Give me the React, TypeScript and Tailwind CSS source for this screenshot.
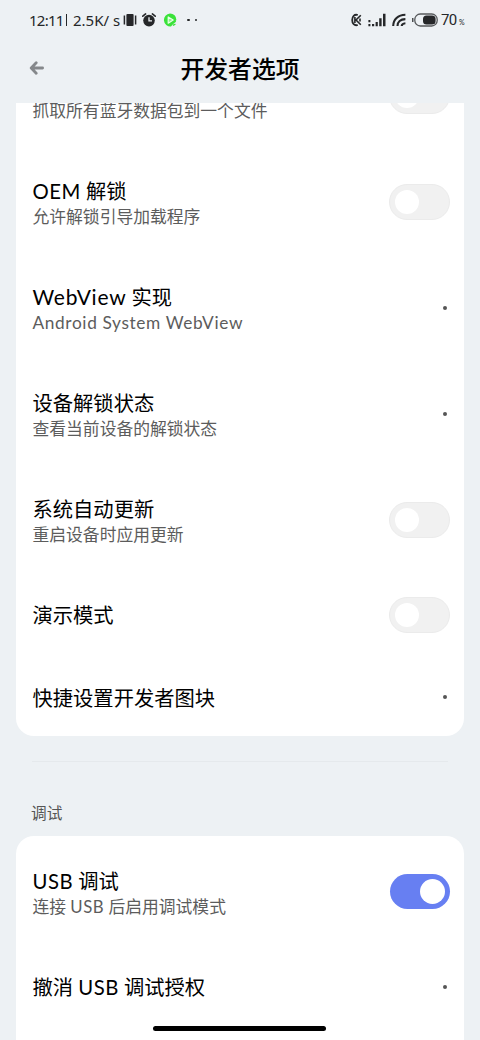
import type { ReactNode } from "react";

function Latin({ children, wide = false }: { children: ReactNode; wide?: boolean }) {
  return <span className={wide ? "text-[21px] leading-none tracking-[0.75px]" : "tracking-[0.5px]"}>{children}</span>;
}

function Toggle({ on = false }: { on?: boolean }) {
  return (
    <span
      className={
        on
          ? "mr-[0.5px] mb-px flex h-[35px] w-[60px] shrink-0 items-center justify-end rounded-full bg-[#677ff2] pr-[5px]"
          : "flex h-9 w-[61px] shrink-0 items-center rounded-full border border-[#ebebeb] bg-[#f1f1f1] pl-[5px]"
      }
    >
      <span className={on ? "size-[25px] rounded-full bg-white" : "size-6 rounded-full bg-white"} />
    </span>
  );
}

function Dot() {
  return <span className="mr-[3px] size-1 shrink-0 rounded-full bg-[#555]" />;
}

function Row({ title, sub, end, last = false }: { title?: ReactNode; sub?: ReactNode; end: ReactNode; last?: boolean }) {
  return (
    <div
      className={
        sub
          ? "flex h-[106px] shrink-0 items-center justify-between pr-3.5 pl-[16.5px]"
          : last
            ? "flex h-20 shrink-0 items-center justify-between pt-[2px] pr-3.5 pl-[16.5px]"
            : "flex h-[83px] shrink-0 items-center justify-between pr-3.5 pl-[16.5px]"
      }
    >
      <div className="pt-[2.4px] whitespace-nowrap">
        <div className="h-[27px] text-[20.3px] leading-[27px] text-black">{title}</div>
        {sub && <div className="text-[16.8px] leading-[23px] text-[#5c5c5c]">{sub}</div>}
      </div>
      {end}
    </div>
  );
}

function StatusBar() {
  return (
    <div className="flex h-10 shrink-0 items-center pl-[29px] text-[#252729]">
      <div className="flex w-[92px] items-center font-['Noto_Sans',sans-serif] text-[15px] whitespace-nowrap">
        <span className="w-[37px] tracking-[-0.75px]">12:11</span>
        <span className="mr-[6px] h-3 w-px bg-current" />
        <span className="w-[40px]">2.5K/</span>
        <span>s</span>
      </div>
      <svg className="ml-[2px] h-3.5 w-3.5" viewBox="0 0 14 14" fill="currentColor">
        <rect x="3.4" y="1" width="7.2" height="12" rx="1" />
        <path d="M1.4 2.4v9.2M12.6 2.4v9.2" stroke="currentColor" strokeWidth="1.5" />
      </svg>
      <svg className="ml-[5px] h-3.5 w-3.5" viewBox="0 0 14 14">
        <circle cx="7" cy="7.6" r="5.8" fill="currentColor" />
        <path d="M.8 3.2 3.6 .9M13.2 3.2 10.4 .9" stroke="currentColor" strokeWidth="1.6" strokeLinecap="round" />
        <path d="M7 4.2v3.7h3" stroke="#edf1f4" strokeWidth="1.3" fill="none" />
      </svg>
      <svg className="ml-[7px] h-3.5 w-3.5" viewBox="0 0 14 14">
        <path d="M7 .4a6.5 6.5 0 1 0 1 13.1L13.4 7A6.5 6.5 0 0 0 7 .4Z" fill="#3ae239" />
        <path d="M5.2 4v6.2L10.2 7Z" stroke="#e8ffe8" strokeWidth="1.2" fill="#8df28b" strokeLinejoin="round" />
        <path d="m9 10.6 3.8-2.3M9.8 12.4l2.6-1.2" stroke="#3ae239" strokeWidth="1.3" />
      </svg>
      <span className="ml-[10px] size-[2.5px] rounded-full bg-current" />
      <span className="ml-[5px] size-[2.5px] rounded-full bg-current" />
      <svg className="ml-auto h-3.5 w-[11px]" viewBox="0 0 11 14" fill="none" stroke="currentColor" strokeWidth="1.8">
        <path d="M6.8 2C3.2 1 1.2 3.5 1.2 7s2 6 5.6 5" />
        <path d="M9.8 2.2 5 7l4.8 4.8M3.9 4v6M9 5.6v2.8" strokeWidth="1.6" />
      </svg>
      <svg className="ml-[6px] h-3.5 w-[18px]" viewBox="0 0 18 14" fill="currentColor">
        <path d="M.4 7h2v2.2h-2zM.4 11h2v2.2h-2zM4 11h2.2v2.2H4zM7.6 9h2.2v4.2H7.6zM11.2 5.3h2.4v7.9h-2.4zM15 .8h2.5v12.4H15z" />
      </svg>
      <svg className="ml-[6px] h-3.5 w-3.5" viewBox="0 0 14 14" fill="none" stroke="currentColor" strokeWidth="2.1">
        <path d="M1.2 13C1.2 6.5 6 1.8 13.4 1.7M5.5 13c0-4 3-6.8 7.9-6.9M9.7 13c.1-1.6 1.3-2.6 3.7-2.8" />
      </svg>
      <svg className="ml-[6px] h-3.5 w-[26px]" viewBox="0 0 26 14">
        <path d="M.8 5v4" stroke="currentColor" strokeWidth="1.2" />
        <rect x="2.8" y="1" width="22.4" height="12" rx="5.5" fill="none" stroke="#55585a" strokeWidth="1.3" />
        <rect x="11" y="2.5" width="12.6" height="9" rx="3.5" fill="currentColor" />
      </svg>
      <span className="mt-px ml-[3px] w-[16px] font-['Roboto',sans-serif] text-[15px] tracking-[-0.6px]">70</span>
      <span className="mt-1 mr-[15px] ml-[2px] w-1.5 text-[7px]">%</span>
    </div>
  );
}

export default function App() {
  return (
    <div className="relative flex h-[1040px] w-[480px] flex-col overflow-hidden bg-[#edf1f4] font-['Lato','Noto_Sans_CJK_SC',sans-serif]">
      <StatusBar />
      <header className="grid h-[63px] shrink-0 grid-cols-[1fr_auto_1fr] items-center pb-[7px]">
        <svg className="ml-[29px] h-3.5 w-4" viewBox="0 0 16 14" fill="none" stroke="#85888b" strokeWidth="2.8" strokeLinecap="round" strokeLinejoin="round">
          <path d="M7.2 1.8 2.2 7l5 5.2M3 7h10.6" />
        </svg>
        <h1 className="pt-px text-[23.8px] leading-8 font-medium text-black">开发者选项</h1>
        <span />
      </header>
      <main className="flex min-h-0 flex-1 flex-col overflow-hidden px-4">
        <section className="-mt-[60px] flex shrink-0 flex-col rounded-[18px] bg-white">
          <Row sub="抓取所有蓝牙数据包到一个文件" end={<Toggle />} />
          <Row title={<><Latin>OEM</Latin> 解锁</>} sub="允许解锁引导加载程序" end={<Toggle />} />
          <Row title={<><Latin wide>WebView</Latin> 实现</>} sub={<span className="text-[17.3px] tracking-[0.63px]">Android System WebView</span>} end={<Dot />} />
          <Row title="设备解锁状态" sub="查看当前设备的解锁状态" end={<Dot />} />
          <Row title="系统自动更新" sub="重启设备时应用更新" end={<Toggle />} />
          <Row title="演示模式" end={<Toggle />} />
          <Row title="快捷设置开发者图块" end={<Dot />} last />
        </section>
        <hr className="mx-4 mt-[25px] shrink-0 border-[#e5e9ec]" />
        <h2 className="mt-[39px] mb-[11px] ml-[15px] shrink-0 text-[15.7px] leading-6 text-[#555]">调试</h2>
        <section className="flex shrink-0 flex-col rounded-t-[18px] bg-white pt-[3px] pb-8">
          <Row title={<><Latin>USB</Latin> 调试</>} sub={<>连接 <Latin>USB</Latin> 后启用调试模式</>} end={<Toggle on />} />
          <Row title={<>撤消 <Latin>USB</Latin> 调试授权</>} end={<Dot />} />
        </section>
      </main>
      <div className="absolute bottom-[9px] left-[153px] h-[5px] w-[173px] rounded-full bg-black" />
    </div>
  );
}
